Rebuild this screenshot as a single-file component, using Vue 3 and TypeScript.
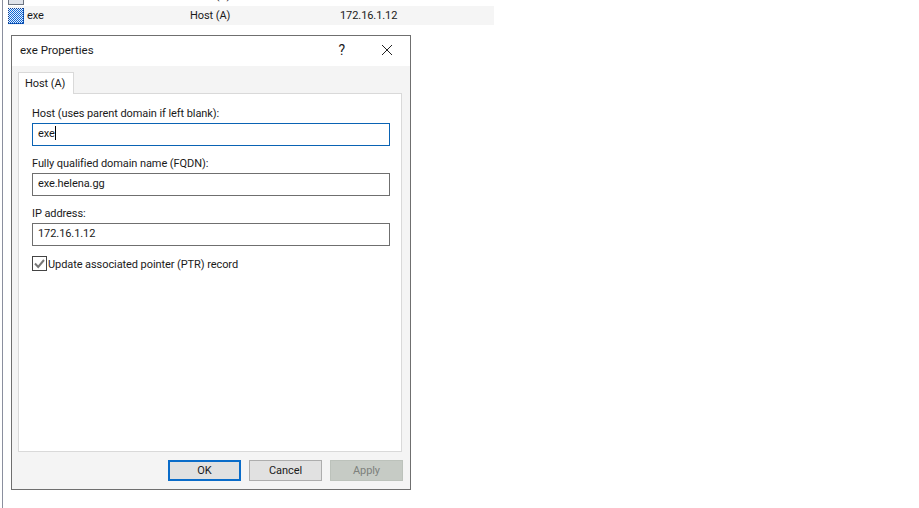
<script setup lang="ts">
const fields = [
  { label: 'Host (uses parent domain if left blank):', value: 'exe', focused: true },
  { label: 'Fully qualified domain name (FQDN):', value: 'exe.helena.gg', focused: false },
  { label: 'IP address:', value: '172.16.1.12', focused: false },
]
</script>

<template>
  <div class="page">
    <div class="row clipped">
      <svg class="icon" width="16" height="5" viewBox="0 0 16 5"><rect x="0" y="0" width="16" height="5" fill="#dfe3ea" /><rect x="0.5" y="-1" width="15" height="5.5" fill="none" stroke="#6d7480" /></svg>
      <span class="c1 top">www</span>
      <span class="c2 top">Host (A)</span>
      <span class="c3 top">172.16.1.24</span>
    </div>
    <div class="row selected">
      <svg class="icon" width="16" height="16" viewBox="0 0 16 16" shape-rendering="crispEdges">
        <defs>
          <pattern id="dither" width="2" height="2" patternUnits="userSpaceOnUse">
            <rect width="2" height="2" fill="#e8f0fb" />
            <rect width="1" height="1" fill="#0f66d6" />
            <rect x="1" y="1" width="1" height="1" fill="#0f66d6" />
          </pattern>
        </defs>
        <rect width="16" height="16" fill="url(#dither)" />
        <path d="M0.5 0v16M15.5 0v16M0 0.5h16M0 15.5h16" stroke="#0b3f94" stroke-dasharray="1 1" fill="none" />
      </svg>
      <span class="c1">exe</span>
      <span class="c2">Host (A)</span>
      <span class="c3">172.16.1.12</span>
    </div>

    <section class="dialog">
      <header class="title">
        <span class="title-text">exe Properties</span>
        <span class="help">?</span>
        <svg class="close" width="12" height="12" viewBox="0 0 12 12"><path d="M1 1l10 10M11 1L1 11" stroke="#222" stroke-width="1" fill="none" /></svg>
      </header>
      <div class="body">
        <div class="tab">Host (A)</div>
        <div class="panel">
          <div v-for="f in fields" :key="f.label" class="field">
            <div class="label">{{ f.label }}</div>
            <div class="input" :class="{ focused: f.focused }">{{ f.value }}<span v-if="f.focused" class="caret"></span></div>
          </div>
          <div class="check-row">
            <svg width="15" height="15" viewBox="0 0 15 15"><rect x="0.5" y="0.5" width="14" height="14" fill="#fff" stroke="#444" /><path d="M3 7.5l3.2 3.4L12 4" fill="none" stroke="#777" stroke-width="2" /></svg>
            <span>Update associated pointer (PTR) record</span>
          </div>
        </div>
        <div class="buttons">
          <div class="btn default">OK</div>
          <div class="btn">Cancel</div>
          <div class="btn disabled">Apply</div>
        </div>
      </div>
    </section>
  </div>
</template>

<style>
html, body { background: #fff; overflow: hidden; }
</style>

<style scoped>
.page {
  width: 919px;
  height: 508px;
  box-sizing: border-box;
  padding-left: 8px;
  overflow: hidden;
  position: relative;
  font-family: Roboto, "Noto Sans", sans-serif;
  font-size: 11px;
  letter-spacing: -0.08px;
  color: #1a1a1a;
  background: #fff;
}
.page::before {
  content: "";
  position: absolute;
  left: 2px;
  top: 0;
  bottom: 0;
  width: 1px;
  background: #8a8f9e;
}
.row {
  width: 486px;
  display: flex;
  align-items: center;
  position: relative;
}
.clipped { height: 6px; overflow: hidden; align-items: flex-start; }
.selected { height: 19px; background: #f5f5f5; }
.icon { flex: none; }
.c1 { width: 166px; padding-left: 3px; box-sizing: border-box; }
.c2 { width: 150px; }
.c1.top, .c2.top, .c3.top { margin-top: -11px; }
.dialog {
  box-sizing: border-box;
  width: 400px;
  height: 455px;
  margin: 10px 0 0 3px;
  border: 1px solid #6f6f6f;
  background: #f4f4f4;
  display: flex;
  flex-direction: column;
}
.title {
  height: 30px;
  flex: none;
  background: #fff;
  display: flex;
  align-items: center;
  padding-left: 8px;
  padding-bottom: 2px;
  box-sizing: border-box;
}
.title-text { flex: 1; font-size: 11.5px; letter-spacing: 0; }
.help { font-size: 14px; margin-right: 36px; font-weight: 400; }
.close { margin-right: 17px; }
.body {
  flex: 1;
  display: flex;
  flex-direction: column;
  padding: 6px 8px 8px 6px;
  min-height: 0;
}
.tab {
  box-sizing: border-box;
  width: 56px;
  height: 22px;
  padding-left: 6px;
  line-height: 21px;
  background: #fff;
  border: 1px solid #d9d9d9;
  border-bottom: none;
  position: relative;
  z-index: 1;
  margin-bottom: -1px;
}
.panel {
  flex: 1;
  background: #fff;
  border: 1px solid #d9d9d9;
  padding: 11px 11px 0 13px;
  min-height: 0;
}
.field { margin-bottom: 9px; }
.label { height: 18px; line-height: 18px; }
.input {
  box-sizing: border-box;
  height: 23px;
  border: 1px solid #6f6f6f;
  padding-left: 5px;
  line-height: 20px;
  background: #fff;
}
.input.focused { border-color: #0a63b4; }
.caret {
  display: inline-block;
  width: 1px;
  height: 14px;
  background: #000;
  vertical-align: -3px;
}
.check-row {
  display: flex;
  align-items: center;
  gap: 1px;
  height: 16px;
  margin-top: 3px;
}
.check-row span { padding-top: 2px; }
.buttons {
  flex: none;
  display: flex;
  justify-content: flex-end;
  gap: 8px;
  padding-top: 8px;
  margin-right: -1px;
}
.btn {
  box-sizing: border-box;
  width: 73px;
  height: 21px;
  text-align: center;
  line-height: 20px;
  background: #e1e1e1;
  border: 1px solid #adadad;
}
.btn.default { border: 2px solid #0a6cc9; line-height: 18px; }
.btn.disabled { background: #c6cbc5; border-color: #bcc2bb; color: #7d817c; }
</style>
